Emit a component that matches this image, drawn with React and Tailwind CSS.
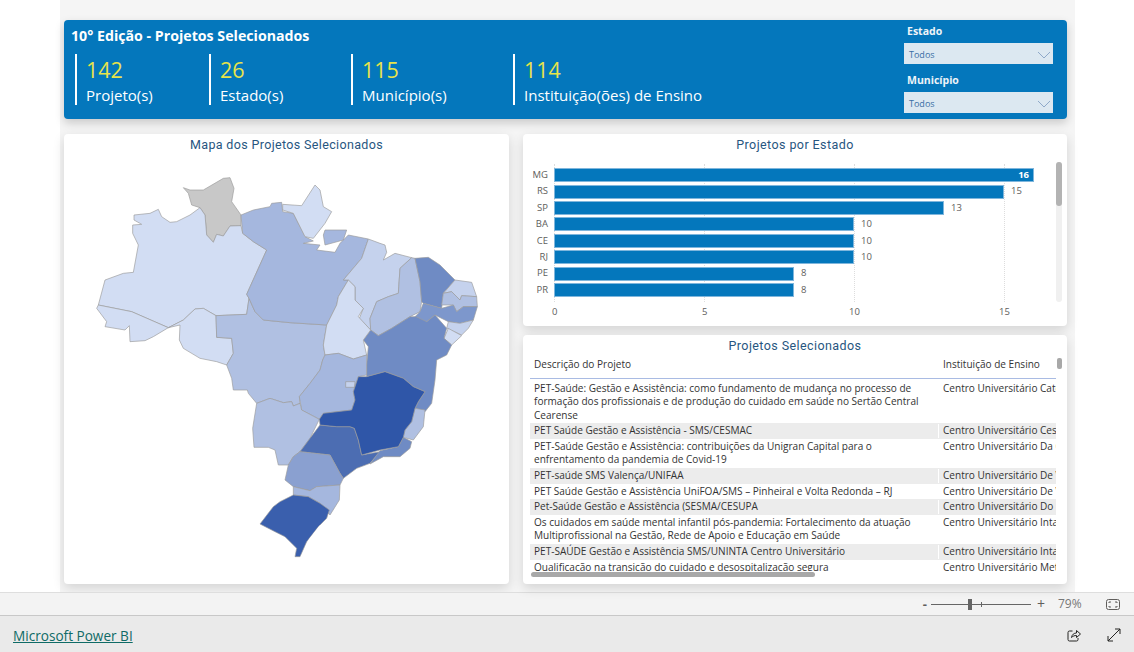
import React from "react";

const SEGOE = "font-['Open_Sans','Noto_Sans',sans-serif]";
const DIN = "font-['Roboto',sans-serif]";

// mapa: coordenadas em 3x, pagina = (90 + x/3, 165 + y/3)
const S = (x, y) => [450 + x, 585 + y];
const south = (pts) => pts.map(([x, y]) => S(x, y).join(",")).join(" ");
const north = (pts) => pts.map((p) => p.join(",")).join(" ");

const L1 = "#d2ddf3";
const L2 = "#c5d2ed";
const L3 = "#b0c0e2";
const L4 = "#a5b7de";
const D1 = "#6f8bc4";

const statesNorth = [
  { f: "#c8c8c8", p: [[280,68],[300,75],[340,75],[400,40],[420,38],[432,70],[425,110],[453,150],[453,182],[420,183],[400,213],[380,208],[370,232],[350,210],[345,150],[330,128],[305,120],[295,85]] },
  { f: L1, p: [[132,150],[180,145],[205,133],[215,155],[240,172],[260,170],[300,150],[330,128],[345,150],[350,210],[370,232],[380,208],[400,213],[420,183],[453,182],[458,205],[490,230],[530,255],[470,388],[477,400],[470,448],[378,452],[340,430],[315,432],[280,465],[235,488],[125,440],[25,420],[45,345],[100,325],[130,322],[145,240],[128,205],[128,180],[155,178],[132,165]] },
  { f: L1, p: [[25,420],[125,440],[235,488],[190,515],[165,527],[120,530],[118,482],[105,495],[75,490],[45,485],[50,470],[20,430]] },
  { f: L1, p: [[235,488],[280,465],[315,432],[340,430],[378,452],[380,517],[425,520],[430,565],[410,600],[380,590],[330,580],[280,550],[268,525],[270,480]] },
  { f: L3, p: [[378,452],[470,448],[477,400],[495,440],[520,465],[600,473],[710,480],[700,540],[705,570],[698,585],[690,615],[660,655],[628,695],[630,715],[610,723],[605,710],[580,713],[540,700],[500,715],[475,685],[472,675],[430,675],[425,640],[410,600],[430,565],[425,520],[380,517]] },
  { f: L4, p: [[453,150],[490,135],[540,125],[545,115],[575,112],[578,140],[610,145],[645,215],[670,228],[640,235],[690,240],[680,255],[735,262],[750,235],[775,210],[835,222],[815,280],[760,345],[775,345],[745,395],[740,420],[710,480],[600,473],[520,465],[495,440],[477,400],[470,388],[530,255],[490,230],[458,205]] },
  { f: L4, p: [[705,195],[770,195],[760,225],[705,240],[700,210]] },
  { f: L1, p: [[578,118],[635,122],[675,60],[690,75],[700,125],[725,140],[705,175],[670,220],[645,215],[610,145],[578,135]] },
  { f: L2, p: [[835,222],[870,235],[885,240],[890,262],[880,285],[915,265],[965,278],[930,310],[925,385],[895,395],[860,410],[840,460],[842,495],[808,460],[820,430],[795,405],[795,365],[775,345],[760,345],[815,280]] },
  { f: L3, p: [[965,278],[975,280],[990,350],[995,410],[990,440],[960,455],[905,490],[865,512],[842,495],[840,460],[860,410],[895,395],[925,385],[930,310]] },
  { f: D1, p: [[975,280],[1015,277],[1050,300],[1095,345],[1060,385],[1055,430],[1000,415],[995,410],[990,350]] },
  { f: L2, p: [[1095,345],[1145,352],[1160,395],[1115,392],[1110,405],[1085,380],[1060,385]] },
  { f: L3, p: [[1060,385],[1085,380],[1110,405],[1115,392],[1160,395],[1162,425],[1120,425],[1100,440],[1090,420],[1055,420]] },
  { f: "#7d97cc", p: [[1000,415],[1055,430],[1090,420],[1100,440],[1120,425],[1162,425],[1150,465],[1110,475],[1075,470],[1035,450],[1010,470],[985,475],[975,455],[990,440]] },
  { f: L2, p: [[1075,470],[1110,475],[1150,465],[1135,490],[1115,510],[1070,490]] },
  { f: L1, p: [[1075,490],[1115,512],[1085,540],[1062,520]] },
  { f: D1, p: [[842,495],[865,512],[905,490],[960,455],[978,455],[1010,470],[1035,450],[1070,490],[1062,520],[1085,540],[1070,570],[1040,585],[1035,645],[1025,715],[1005,740],[975,730],[985,710],[1005,680],[970,665],[940,640],[885,620],[830,635],[830,600],[835,545],[820,525]] },
  { f: L1, p: [[775,345],[795,365],[795,405],[820,430],[805,455],[842,495],[820,525],[830,570],[790,582],[745,565],[705,570],[700,540],[710,480],[740,420],[745,395]] },
  { f: L4, p: [[705,570],[745,565],[790,582],[830,570],[830,630],[805,635],[790,680],[795,705],[785,735],[700,745],[688,763],[635,735],[628,695],[660,655],[690,615],[698,585]] },
  { f: L2, p: [[767,650],[795,650],[793,667],[767,667]] },
];

const statesSouth = [
  { f: L3, p: [[50,130],[90,115],[130,128],[155,125],[160,138],[180,130],[185,150],[238,178],[210,235],[180,275],[160,290],[145,315],[115,315],[105,270],[85,262],[42,262],[38,205]] },
  { f: "#4c6db2", p: [[240,195],[290,200],[330,200],[343,205],[355,240],[365,285],[420,275],[390,310],[350,325],[310,355],[300,340],[270,285],[180,275],[210,235]] },
  { f: D1, p: [[490,232],[515,245],[510,265],[480,290],[430,290],[390,312],[420,272],[475,260]] },
  { f: L3, p: [[525,145],[555,150],[550,200],[520,240],[490,232],[495,210],[515,185]] },
  { f: "#2f56a8", p: [[238,178],[250,160],[335,150],[345,120],[340,95],[355,50],[380,50],[435,35],[490,55],[520,80],[555,95],[535,125],[525,145],[515,185],[495,210],[490,232],[475,260],[420,270],[365,285],[355,240],[343,205],[330,200],[290,200],[240,195]] },
  { f: "#8aa0d0", p: [[180,275],[270,285],[300,340],[310,355],[300,375],[230,380],[210,392],[160,380],[135,360],[145,315],[160,290]] },
  { f: L4, p: [[160,380],[210,392],[230,380],[300,375],[298,420],[270,465],[240,430],[205,410],[160,405]] },
  { f: "#3a5fad", p: [[160,405],[205,410],[240,430],[268,450],[260,475],[235,500],[200,545],[180,590],[165,590],[170,565],[135,530],[105,515],[60,492],[100,440],[120,425]] },
];

const bars = [
  { uf: "MG", n: 16, w: "w-[480px]" },
  { uf: "RS", n: 15, w: "w-[450px]" },
  { uf: "SP", n: 13, w: "w-[390px]" },
  { uf: "BA", n: 10, w: "w-[300px]" },
  { uf: "CE", n: 10, w: "w-[300px]" },
  { uf: "RJ", n: 10, w: "w-[300px]" },
  { uf: "PE", n: 8, w: "w-[240px]" },
  { uf: "PR", n: 8, w: "w-[240px]" },
];

const rows = [
  { d: ["PET-Saúde: Gestão e Assistência: como fundamento de mudança no processo de", "formação dos profissionais e de produção do cuidado em saúde no Sertão Central", "Cearense"], i: "Centro Universitário Católica" },
  { d: ["PET Saúde Gestão e Assistência - SMS/CESMAC"], i: "Centro Universitário Cesmac" },
  { d: ["PET-Saúde Gestão e Assistência: contribuições da Unigran Capital para o", "enfrentamento da pandemia de Covid-19"], i: "Centro Universitário Da Grande" },
  { d: ["PET-saúde SMS Valença/UNIFAA"], i: "Centro Universitário De Valença" },
  { d: ["PET Saúde Gestão e Assistência UniFOA/SMS – Pinheiral e Volta Redonda – RJ"], i: "Centro Universitário De Volta" },
  { d: ["Pet-Saúde Gestão e Assistência (SESMA/CESUPA"], i: "Centro Universitário Do Estado" },
  { d: ["Os cuidados em saúde mental infantil pós-pandemia: Fortalecimento da atuação", "Multiprofissional na Gestão, Rede de Apoio e Educação em Saúde"], i: "Centro Universitário Inta" },
  { d: ["PET-SAÚDE Gestão e Assistência SMS/UNINTA Centro Universitário"], i: "Centro Universitário Inta" },
  { d: ["Qualificação na transição do cuidado e desospitalização segura"], i: "Centro Universitário Metodista" },
];

const Chevron = () => (
  <svg width="14" height="8" viewBox="0 0 14 8" fill="none" stroke="#8fa9c9" strokeWidth="1">
    <path d="M1 1l6 6 6-6" />
  </svg>
);

const Select = ({ label }) => (
  <div>
    <div className="text-[10.5px] leading-[14px] font-bold text-[#eef4f8] pl-[3px]">{label}</div>
    <div className="mt-[5px] h-[21px] w-[149px] bg-[#dce8f1] flex items-center justify-between pt-[2px] pl-[5px] pr-[2px] text-[9px] text-[#3a6ea5]">
      <span>Todos</span>
      <Chevron />
    </div>
  </div>
);

const Kpi = ({ value, label, w }) => (
  <div className={`${w} border-l-[2.5px] border-white h-[51px] pl-[9px] text-white`}>
    <div className="pt-[1px] text-[21.5px] leading-[30px] text-[#e8e34a]">{value}</div>
    <div className="text-[15px] leading-[20px] whitespace-nowrap">{label}</div>
  </div>
);

const App = () => {
  return (
    <div className={`w-[1134px] h-[652px] bg-white overflow-hidden flex flex-col ${SEGOE}`}>
      <div className="ml-[60px] w-[1015px] h-[592px] shrink-0 bg-[#f5f5f5] pt-[20px] pl-[4px]">
        {/* cabecalho */}
        <div className="w-[1003px] h-[99px] bg-[#0477bc] rounded-[4px] shadow-[0_4px_10px_rgba(0,0,0,0.18)] flex justify-between pl-[7px] pr-[14px]">
          <div>
            <div className="mt-[7px] text-[14.2px] leading-[18px] font-bold text-white whitespace-nowrap">10° Edição - Projetos Selecionados</div>
            <div className="mt-[9px] ml-[4px] flex">
              <Kpi value="142" label="Projeto(s)" w="w-[134px]" />
              <Kpi value="26" label="Estado(s)" w="w-[142px]" />
              <Kpi value="115" label="Município(s)" w="w-[162px]" />
              <Kpi value="114" label="Instituição(ões) de Ensino" w="w-[200px]" />
            </div>
          </div>
          <div className="pt-[4px] flex flex-col gap-[9px]">
            <Select label="Estado" />
            <Select label="Município" />
          </div>
        </div>

        <div className="mt-[15px] flex gap-[14px]">
          {/* mapa */}
          <div className="w-[445px] h-[450px] bg-white rounded-[4px] shadow-[0_4px_12px_rgba(0,0,0,0.14)]">
            <div className={`h-[26px] pt-[2px] text-center text-[12.5px] leading-[18px] tracking-[0.35px] text-[#27567f] ${DIN}`}>Mapa dos Projetos Selecionados</div>
            <svg width="445" height="420" viewBox="-78 -15 1335 1260" className="block">
              <g stroke="#9c9c9c" strokeWidth="2" strokeLinejoin="round">
                {statesNorth.map((s, i) => (
                  <polygon key={i} points={north(s.p)} fill={s.f} />
                ))}
                {statesSouth.map((s, i) => (
                  <polygon key={i} points={south(s.p)} fill={s.f} />
                ))}
              </g>
              <polygon points={south([[205,540],[240,495],[235,525]])} fill="#ffffff" />
            </svg>
          </div>

          <div className="w-[544px] flex flex-col gap-[9px]">
            {/* barras */}
            <div className="relative h-[192px] bg-white rounded-[4px] shadow-[0_4px_12px_rgba(0,0,0,0.14)]">
              <div className={`h-[33px] pt-[2px] text-center text-[12.5px] leading-[18px] tracking-[0.42px] text-[#27567f] ${DIN}`}>Projetos por Estado</div>
              <div className="absolute left-[31px] top-[30px] h-[138px] border-l border-dotted border-[#dddddd]" />
              <div className="absolute left-[181px] top-[30px] h-[138px] border-l border-dotted border-[#dddddd]" />
              <div className="absolute left-[331px] top-[30px] h-[138px] border-l border-dotted border-[#dddddd]" />
              <div className="absolute left-[481px] top-[30px] h-[138px] border-l border-dotted border-[#dddddd]" />
              <div className="relative h-[134px]">
                {bars.map((b) => (
                  <div key={b.uf} className="h-[16.4px] flex items-center text-[9.5px] text-[#605e5c]">
                    <div className="w-[25px] mr-[6px] text-right">{b.uf}</div>
                    <div className={`${b.w} h-[14px] bg-[#0477bc] border border-[#7fb6dc] flex items-center justify-end pr-[4px] text-white font-bold`}>
                      {b.n === 16 && "16"}
                    </div>
                    {b.n !== 16 && <div className="ml-[7px]">{b.n}</div>}
                  </div>
                ))}
              </div>
              <div className="relative mt-[4px] h-[14px] text-[9.5px] text-[#605e5c]">
                <span className="absolute left-[29px]">0</span>
                <span className="absolute left-[179px]">5</span>
                <span className="absolute left-[326px]">10</span>
                <span className="absolute left-[476px]">15</span>
              </div>
              <div className="absolute left-[533px] top-[28px] w-[6px] h-[140px] rounded-[3px] bg-[#f0f0f0]">
                <div className="h-[44px] rounded-[3px] bg-[#b3b3b3]" />
              </div>
            </div>

            {/* tabela */}
            <div className="relative h-[249px] bg-white rounded-[4px] shadow-[0_4px_12px_rgba(0,0,0,0.14)]">
              <div className={`h-[21px] text-center pt-[2px] text-[12.5px] leading-[18px] tracking-[0.42px] text-[#27567f] ${DIN}`}>Projetos Selecionados</div>
              <div className="ml-[7px] w-[526px] h-[215px] overflow-hidden text-[10.05px] leading-[13.6px] text-[#333333]">
                <div className="flex h-[23px] pt-[2px] border-b border-[#a9bbe3] mb-[1.5px]">
                  <div className="w-[409px] pl-[4px]">Descrição do Projeto</div>
                  <div className="pl-[4px] whitespace-nowrap">Instituição de Ensino</div>
                </div>
                {rows.map((r, i) => (
                  <div key={i} className={`flex py-[1px] ${i % 2 === 1 ? "bg-[#ececec]" : "bg-white"}`}>
                    <div className="w-[409px] shrink-0 pl-[4px] whitespace-nowrap border-r border-white">
                      {r.d.map((line, j) => (
                        <div key={j}>{line}</div>
                      ))}
                    </div>
                    <div className="pl-[4px] whitespace-nowrap overflow-hidden">{r.i}</div>
                  </div>
                ))}
              </div>
              <div className="absolute left-[8px] top-[237px] w-[284px] h-[5px] rounded-[3px] bg-[#a8a8a8]" />
              <div className="absolute left-[534px] top-[23px] w-[5px] h-[11px] rounded-[2px] bg-[#a8a8a8]" />
            </div>
          </div>
        </div>
      </div>

      {/* barra de zoom */}
      <div className="h-[24px] shrink-0 bg-[#f3f3f3] border-t border-[#dedede] border-b border-b-[#c8c8c8] flex items-center justify-end pr-[14px] text-[#605e5c]">
        <span className="text-[13px] font-bold leading-none mr-[4px]">-</span>
        <div className="relative w-[100px] h-[1px] bg-[#666666] mr-[6px]">
          <div className="absolute left-[37px] top-[-5px] w-[4px] h-[11px] bg-[#666666]" />
          <div className="absolute left-[50px] top-[-2px] w-[1px] h-[5px] bg-[#666666]" />
        </div>
        <span className="text-[14px] leading-none mr-[13px]">+</span>
        <span className="text-[12px] text-[#777777] w-[36px]">79%</span>
        <svg width="14" height="11" viewBox="0 0 14 11" fill="none" stroke="#605e5c" className="ml-[12px]">
          <rect x="0.5" y="0.5" width="13" height="10" rx="2" />
          <path d="M3 4V3h2M9 3h2v1M11 7v1H9M5 8H3V7" />
        </svg>
      </div>

      {/* rodape */}
      <div className="flex-1 bg-[#eaeaea] flex items-center pl-[13px] pr-[13px] pt-[1px]">
        <a className="mt-[3px] text-[13.6px] underline text-[#0f6b66]">Microsoft Power BI</a>
        <div className="ml-auto flex items-center gap-[26px]">
          <svg width="14" height="14" viewBox="0 0 14 14" fill="none" stroke="#252423">
            <path d="M5.5 3H2.5a1.5 1.5 0 0 0-1.5 1.5v7A1.5 1.5 0 0 0 2.5 13h7a1.5 1.5 0 0 0 1.5-1.5V10" />
            <path d="M4.5 9.5C5 6.5 7 5 9.5 5V2.5L13.5 6l-4 3.5V7.5C7.5 7.5 6 8 4.5 9.5z" />
          </svg>
          <svg width="14" height="14" viewBox="0 0 14 14" fill="none" stroke="#252423">
            <path d="M1 13L13 1M8 1h5v5M1 8v5h5" />
          </svg>
        </div>
      </div>
    </div>
  );
};

export default App;
